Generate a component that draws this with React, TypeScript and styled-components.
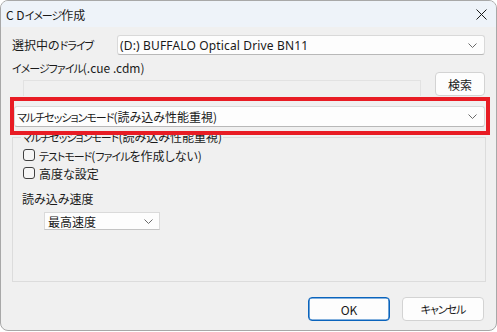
import React from "react";
import styled, { createGlobalStyle } from "styled-components";

const GlobalStyle = createGlobalStyle`
  html, body {
    margin: 0;
    padding: 0;
    background: #ffffff;
  }
  body {
    font-family: "Noto Sans CJK JP", "Noto Sans", sans-serif;
    font-size: 12px;
    color: #1a1a1a;
    font-feature-settings: "palt";
  }
`;

// katakana in the Windows UI font are smaller and proportional
const Kana = styled.span`
  font-size: 11px;
  letter-spacing: -1px;
`;

const Chevron = () => (
  <svg width="9" height="5" viewBox="0 0 9 5">
    <path d="M0.5 0.5L4.5 4.5L8.5 0.5" fill="none" stroke="#6a6a6a" strokeWidth="1" />
  </svg>
);

const CloseIcon = () => (
  <svg width="11" height="11" viewBox="0 0 11 11">
    <path d="M0.5 0.5L10.5 10.5M10.5 0.5L0.5 10.5" stroke="#1a1a1a" strokeWidth="1" />
  </svg>
);

const ModeText = () => (
  <>
    <Kana>マルチセッションモード</Kana>(読み込み性能重視)
  </>
);

export default function App() {
  return (
    <>
      <GlobalStyle />
      <Window>
        <TitleBar>
          <Title>
            C D<Kana>イメージ</Kana>作成
          </Title>
          <CloseButton>
            <CloseIcon />
          </CloseButton>
        </TitleBar>
        <Body>
          <DriveRow>
            <Label>
              選択中の<Kana>ドライブ</Kana>
            </Label>
            <Combo $latin>
              <span>(D:) BUFFALO Optical Drive BN11</span>
              <Chevron />
            </Combo>
          </DriveRow>
          <FileLabel>
            <Kana>イメージファイル</Kana>(.cue .cdm)
          </FileLabel>
          <FileRow>
            <PathField />
            <PushButton $width={50}>検索</PushButton>
          </FileRow>
          <Highlight>
            <Combo>
              <span>
                <ModeText />
              </span>
              <Chevron />
            </Combo>
          </Highlight>
          <GroupBox>
            <Caption>
              <ModeText />
            </Caption>
            <CheckRow>
              <CheckBox />
              <span>
                <Kana>テストモード</Kana>(<Kana>ファイル</Kana>を作成しない)
              </span>
            </CheckRow>
            <CheckRow>
              <CheckBox />
              <span>高度な設定</span>
            </CheckRow>
            <SpeedLabel>読み込み速度</SpeedLabel>
            <SpeedCombo>
              <span>最高速度</span>
              <Chevron />
            </SpeedCombo>
          </GroupBox>
          <ButtonRow>
            <PushButton $width={82} $primary>
              OK
            </PushButton>
            <PushButton $width={82}>
              <Kana>キャンセル</Kana>
            </PushButton>
          </ButtonRow>
        </Body>
      </Window>
    </>
  );
}

const Window = styled.div`
  width: 495px;
  height: 329px;
  border: 1px solid #a8a8a8;
  border-radius: 8px;
  background: #f0f0f0;
  overflow: hidden;
  display: flex;
  flex-direction: column;
`;

const TitleBar = styled.div`
  height: 26px;
  background: #eef3f9;
  display: flex;
  align-items: center;
  justify-content: space-between;
  padding-left: 5px;
  padding-right: 9px;
`;

const Title = styled.div`
  font-size: 12px;
  color: #1a1a1a;
`;

const CloseButton = styled.div`
  display: flex;
  align-items: center;
  margin-top: 1px;
`;

const Body = styled.div`
  flex: 1;
  display: flex;
  flex-direction: column;
  padding: 0 11px 0 11px;
`;

const DriveRow = styled.div`
  margin-top: 8px;
  height: 20px;
  display: flex;
  align-items: center;
`;

const Label = styled.div`
  width: 105px;
  line-height: 16px;
`;

const Combo = styled.div<{ $latin?: boolean }>`
  flex: 1;
  height: ${(p) => (p.$latin ? "100%" : "21px")};
  box-sizing: border-box;
  background: #fdfdfd;
  border: 1px solid #d9d9d9;
  border-bottom-color: #b8b8b8;
  border-radius: 3px;
  display: flex;
  align-items: center;
  justify-content: space-between;
  padding: 0 7px 0 2px;
  font-family: ${(p) =>
    p.$latin ? `"Noto Sans", "Noto Sans CJK JP", sans-serif` : "inherit"};
  letter-spacing: ${(p) => (p.$latin ? "0.15px" : "0")};
`;

const FileLabel = styled.div`
  margin-top: 5px;
  line-height: 16px;
`;

const FileRow = styled.div`
  margin-top: -4px;
  height: 24px;
  display: flex;
  align-items: flex-end;
  gap: 14px;
  padding-left: 11px;
`;

const PathField = styled.div`
  flex: 1;
  height: 16px;
  box-sizing: border-box;
  border: 1px solid #e2e2e2;
  border-bottom: none;
  background: #f0f0f0;
`;

const PushButton = styled.div<{ $width: number; $primary?: boolean }>`
  width: ${(p) => p.$width}px;
  height: 24px;
  box-sizing: border-box;
  display: flex;
  align-items: center;
  justify-content: center;
  background: #fdfdfd;
  border: 1px solid ${(p) => (p.$primary ? "#0a64bd" : "#d3d3d3")};
  box-shadow: ${(p) => (p.$primary ? "inset 0 0 0 0.6px #0a64bd" : "none")};
  border-radius: 4px;
  align-self: flex-start;
`;

const Highlight = styled.div`
  position: relative;
  z-index: 1;
  margin: 1px -5px 0 -2px;
  height: 38px;
  box-sizing: border-box;
  border: 4px solid #e81c24;
  padding: 5px 1px 0 0;
  display: flex;
  align-items: flex-start;
`;

const GroupBox = styled.fieldset`
  margin: -6px -1px 0 0;
  padding: 1px 10px 0 10px;
  height: 153px;
  box-sizing: border-box;
  border: 1px solid #dcdcdc;
  min-width: 0;
`;

const Caption = styled.legend`
  margin-left: -2px;
  padding: 0 1px;
  line-height: 16px;
`;

const CheckRow = styled.div`
  height: 18px;
  display: flex;
  align-items: center;
  gap: 4px;
`;

const CheckBox = styled.div`
  width: 12px;
  height: 12px;
  box-sizing: border-box;
  border: 1px solid #404040;
  border-radius: 3px;
  background: #f6f6f6;
`;

const SpeedLabel = styled.div`
  margin-top: 9px;
  margin-left: -1px;
  line-height: 16px;
`;

const SpeedCombo = styled.div`
  margin-top: 5px;
  margin-left: 21px;
  width: 116px;
  height: 18px;
  box-sizing: border-box;
  background: #fdfdfd;
  border: 1px solid #dadada;
  border-bottom-color: #c4c4c4;
  display: flex;
  align-items: center;
  justify-content: space-between;
  padding: 0 6px 0 3px;
`;

const ButtonRow = styled.div`
  margin-top: 15px;
  display: flex;
  justify-content: flex-end;
  gap: 12px;
  padding-right: 1px;
`;
